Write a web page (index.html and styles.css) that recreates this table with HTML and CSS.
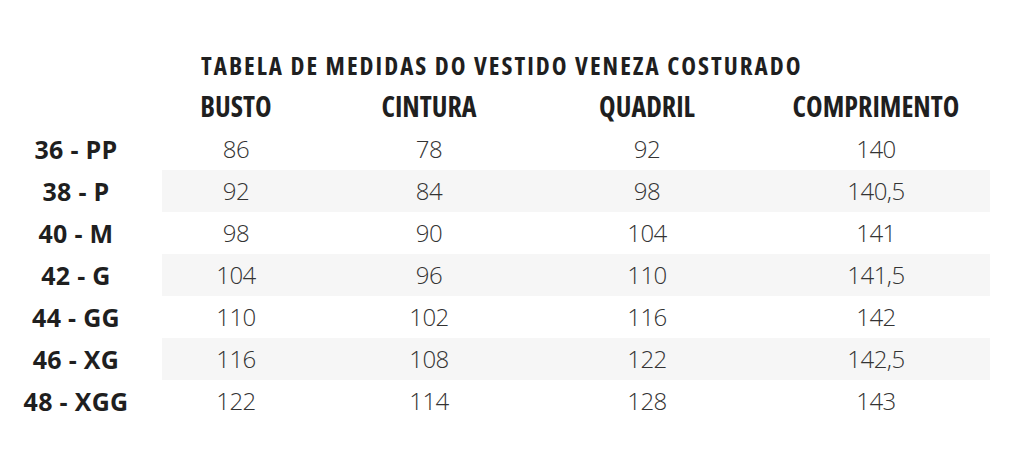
FILE: index.html
```html
<!DOCTYPE html>
<html lang="pt-BR">
<head>
<meta charset="utf-8">
<title>Tabela de medidas do vestido Veneza costurado</title>
<link rel="stylesheet" href="styles.css">
</head>
<body>
<main class="chart">
  <h1 class="title">TABELA DE MEDIDAS DO VESTIDO VENEZA COSTURADO</h1>
  <div class="row head">
    <div class="label"></div>
    <div class="cells">
      <div class="cell">BUSTO</div>
      <div class="cell">CINTURA</div>
      <div class="cell">QUADRIL</div>
      <div class="cell last">COMPRIMENTO</div>
    </div>
  </div>
  <div class="row">
    <div class="label">36 - PP</div>
    <div class="cells">
      <div class="cell">86</div><div class="cell">78</div><div class="cell">92</div><div class="cell last">140</div>
    </div>
  </div>
  <div class="row striped">
    <div class="label">38 - P</div>
    <div class="cells">
      <div class="cell">92</div><div class="cell">84</div><div class="cell">98</div><div class="cell last">140,5</div>
    </div>
  </div>
  <div class="row">
    <div class="label">40 - M</div>
    <div class="cells">
      <div class="cell">98</div><div class="cell">90</div><div class="cell">104</div><div class="cell last">141</div>
    </div>
  </div>
  <div class="row striped">
    <div class="label">42 - G</div>
    <div class="cells">
      <div class="cell">104</div><div class="cell">96</div><div class="cell">110</div><div class="cell last">141,5</div>
    </div>
  </div>
  <div class="row">
    <div class="label">44 - GG</div>
    <div class="cells">
      <div class="cell">110</div><div class="cell">102</div><div class="cell">116</div><div class="cell last">142</div>
    </div>
  </div>
  <div class="row striped">
    <div class="label">46 - XG</div>
    <div class="cells">
      <div class="cell">116</div><div class="cell">108</div><div class="cell">122</div><div class="cell last">142,5</div>
    </div>
  </div>
  <div class="row">
    <div class="label">48 - XGG</div>
    <div class="cells">
      <div class="cell">122</div><div class="cell">114</div><div class="cell">128</div><div class="cell last">143</div>
    </div>
  </div>
</main>
</body>
</html>
```
FILE: styles.css
```css
html, body {
  margin: 0;
  padding: 0;
  background: #ffffff;
}

body {
  font-family: "Open Sans", "Noto Sans", "DejaVu Sans", sans-serif;
  color: #1f1f1f;
}

.chart {
  padding-top: 50px;
}

.title {
  margin: 0;
  padding-left: 201px;
  font-size: 25px;
  line-height: 30px;
  font-weight: 700;
  font-stretch: 75%;
  letter-spacing: 2px;
  color: #1f1f1f;
  white-space: nowrap;
}

.row {
  display: grid;
  grid-template-columns: 162px 828px;
  height: 42px;
  line-height: 42px;
}

.row.head {
  margin-top: 8px;
  margin-bottom: 4px;
  height: 36px;
  line-height: 36px;
}

.label {
  padding-right: 10px;
  text-align: center;
  font-size: 25px;
  font-weight: 700;
  font-stretch: 100%;
  letter-spacing: 0.3px;
  color: #1f1f1f;
  white-space: nowrap;
}

.cells {
  display: grid;
  grid-template-columns: 148px 238px 198px 1fr;
}

.striped .cells {
  background: #f6f6f6;
}

.cell {
  text-align: center;
  font-size: 24px;
  font-weight: 300;
  font-stretch: 100%;
  letter-spacing: -0.5px;
  color: #333333;
  white-space: nowrap;
}

.cell.last {
  padding-left: 16px;
}

.head .cell {
  font-size: 28px;
  font-weight: 700;
  font-stretch: 75%;
  letter-spacing: 0;
  color: #1f1f1f;
}
```
